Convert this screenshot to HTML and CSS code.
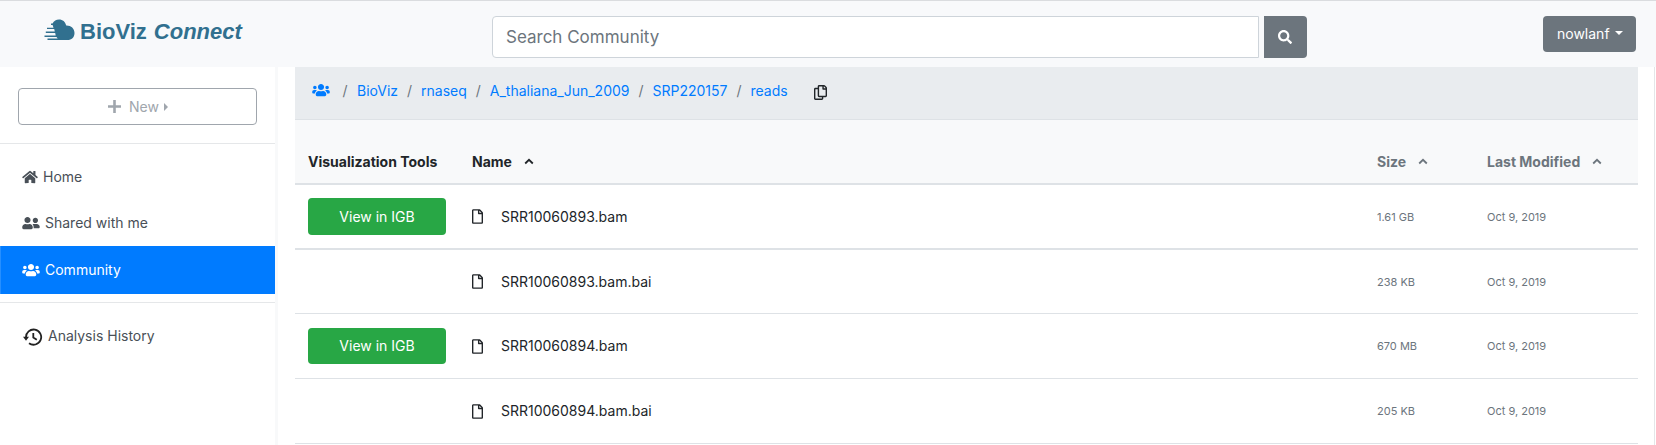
FILE: index.html
```html
<!DOCTYPE html>
<html lang="en">
<head>
<meta charset="utf-8">
<title>BioViz Connect</title>
<link rel="stylesheet" href="styles.css">
</head>
<body>
<svg class="defs" aria-hidden="true">
  <symbol id="users" viewBox="0 0 640 512"><path d="M96 224c35.3 0 64-28.7 64-64s-28.7-64-64-64-64 28.7-64 64 28.7 64 64 64zm448 0c35.3 0 64-28.7 64-64s-28.7-64-64-64-64 28.7-64 64 28.7 64 64 64zm32 32h-64c-17.6 0-33.5 7.1-45.1 18.6 40.3 22.1 68.9 62 75.1 109.4h66c17.7 0 32-14.3 32-32v-32c0-35.3-28.7-64-64-64zm-256 0c61.9 0 112-50.1 112-112S381.9 32 320 32 208 82.1 208 144s50.1 112 112 112zm76.8 32h-8.300c-20.8 10-43.9 16-68.5 16s-47.600-6-68.5-16h-8.300C179.600 288 128 339.600 128 403.200V432c0 26.500 21.500 48 48 48h288c26.500 0 48-21.500 48-48v-28.800c0-63.600-51.600-115.200-115.200-115.200zm-223.700-13.400C161.500 263.100 145.600 256 128 256H64c-35.300 0-64 28.700-64 64v32c0 17.700 14.300 32 32 32h65.900c6.300-47.400 34.900-87.300 75.200-109.400z"/></symbol>
  <symbol id="file" viewBox="0 0 384 512"><path d="M369.900 97.900L286 14C277 5 264.800-.1 252.100-.1H48C21.500 0 0 21.500 0 48v416c0 26.500 21.500 48 48 48h288c26.500 0 48-21.500 48-48V131.900c0-12.700-5.100-25-14.100-34zM332.100 128H256V51.900l76.100 76.100zM48 464V48h160v104c0 13.300 10.700 24 24 24h104v288H48z"/></symbol>
  <symbol id="up" viewBox="0 0 10 7"><path class="stroke" d="M1.200 5.500 5 1.800l3.800 3.700"/></symbol>
</svg>
<header class="topbar">
  <a class="brand">
    <svg class="logo" viewBox="0 0 31 22"><path d="M8.500 4.500C10 1.800 12.200.5 15 .5c3.800 0 6.300 2.300 7.200 6 4.700-.2 8.300 2.900 8.300 7.500 0 4.400-3 7-7 7H3.500v-1.400h10.200l-1.200-1.700H.5v-1.300h11.200l-.5-2.700H1.800v-1.300h9l-.6-2.500H3V8.700h6.500L8.600 6H7V4.500z"/></svg>
    <span class="brand-name">BioViz</span> <em class="brand-em">Connect</em>
  </a>
  <form class="search">
    <input class="search-input" type="text" placeholder="Search Community">
    <button class="search-btn" type="button" aria-label="Search"><svg class="ic-search" viewBox="0 0 512 512"><path d="M505 442.700L405.300 343c-4.500-4.500-10.600-7-17-7H372c27.600-35.300 44-79.700 44-128C416 93.100 322.900 0 208 0S0 93.100 0 208s93.100 208 208 208c48.300 0 92.700-16.400 128-44v16.300c0 6.400 2.500 12.500 7 17l99.700 99.700c9.400 9.400 24.600 9.400 33.900 0l28.300-28.300c9.400-9.400 9.400-24.600.1-34zM208 336c-70.700 0-128-57.200-128-128 0-70.700 57.200-128 128-128 70.700 0 128 57.200 128 128 0 70.700-57.200 128-128 128z"/></svg></button>
  </form>
  <button class="user-btn" type="button"><span>nowlanf</span><i class="caret-down"></i></button>
</header>
<div class="layout">
  <nav class="sidebar">
    <button class="new-btn" type="button"><svg class="ic-plus" viewBox="0 0 13 13"><path d="M5.200 0h2.600v5.200H13v2.600H7.800V13H5.200V7.800H0V5.200h5.200z"/></svg><span>New</span><i class="caret-right"></i></button>
    <div class="nav-main">
      <a class="item home"><svg class="ic-home" viewBox="0 0 576 512"><path d="M280.400 148.300L96 300.100V464a16 16 0 0 0 16 16l112.100-.3a16 16 0 0 0 15.900-16V368a16 16 0 0 1 16-16h64a16 16 0 0 1 16 16v95.600a16 16 0 0 0 16 16.100L464 480a16 16 0 0 0 16-16V300L295.700 148.300a12.200 12.200 0 0 0-15.300 0zM571.600 251.500L488 182.600V44.100a12 12 0 0 0-12-12h-56a12 12 0 0 0-12 12v72.600l-89.500-73.700a48 48 0 0 0-61 0L4.300 251.500a12 12 0 0 0-1.600 16.900l25.500 31a12 12 0 0 0 16.900 1.600l235.200-193.700a12.200 12.200 0 0 1 15.300 0L530.900 301a12 12 0 0 0 16.900-1.600l25.500-31a12 12 0 0 0-1.700-16.900z"/></svg><span>Home</span></a>
      <a class="item shared"><svg class="ic-users" viewBox="0 0 640 512"><path d="M192 256c61.900 0 112-50.100 112-112S253.900 32 192 32 80 82.100 80 144s50.100 112 112 112zm76.800 32h-8.300c-20.800 10-43.900 16-68.500 16s-47.600-6-68.500-16h-8.300C51.600 288 0 339.600 0 403.200V432c0 26.500 21.500 48 48 48h288c26.500 0 48-21.500 48-48v-28.800c0-63.600-51.600-115.200-115.200-115.200zM480 256c53 0 96-43 96-96s-43-96-96-96-96 43-96 96 43 96 96 96zm48 32h-3.800c-13.900 4.800-28.600 8-44.200 8s-30.300-3.200-44.200-8H432c-20.400 0-39.200 5.900-55.700 15.400 24.400 26.300 39.700 61.200 39.700 99.800v38.400c0 2.200-.5 4.300-.6 6.400H592c26.500 0 48-21.500 48-48 0-61.900-50.100-112-112-112z"/></svg><span>Shared with me</span></a>
      <a class="item community active"><svg class="ic-users"><use href="#users"/></svg><span>Community</span></a>
    </div>
    <a class="item history"><svg class="ic-history" viewBox="0 0 20 18"><path class="stroke" d="M3 9.500A7.600 7.600 0 1 1 6 15.200M10.300 5v4.500l3.500 2.200"/><path d="M0 8.800h6l-3 3.900z"/></svg><span>Analysis History</span></a>
  </nav>
  <main class="content">
    <div class="crumbs">
      <svg class="ic-users"><use href="#users"/></svg>
      <i class="sep">/</i><a class="c1">BioViz</a>
      <i class="sep">/</i><a class="c2">rnaseq</a>
      <i class="sep">/</i><a class="c3">A_thaliana_Jun_2009</a>
      <i class="sep">/</i><a class="c4">SRP220157</a>
      <i class="sep">/</i><a class="c5">reads</a>
      <svg class="ic-copy" viewBox="0 0 448 512"><path d="M433.900 65.900l-51.800-51.800A48 48 0 0 0 348.100 0H176c-26.500 0-48 21.500-48 48v48H48c-26.500 0-48 21.500-48 48v320c0 26.500 21.500 48 48 48h224c26.500 0 48-21.500 48-48v-48h80c26.500 0 48-21.500 48-48V99.900a48 48 0 0 0-14.100-34zM266 464H54a6 6 0 0 1-6-6V150a6 6 0 0 1 6-6h74v224c0 26.500 21.500 48 48 48h96v42a6 6 0 0 1-6 6zm128-96H182a6 6 0 0 1-6-6V54a6 6 0 0 1 6-6h106v88c0 13.300 10.700 24 24 24h88v202a6 6 0 0 1-6 6zm6-256h-64V48h9.600c1.600 0 3.100.6 4.300 1.800l48.300 48.300a6 6 0 0 1 1.800 4.300V112z"/></svg>
    </div>
    <div class="row head">
      <span class="h-tools">Visualization Tools</span>
      <span class="h-name"><span>Name</span><svg class="ic-up"><use href="#up"/></svg></span>
      <span class="muted"><span>Size</span><svg class="ic-up"><use href="#up"/></svg></span>
      <span class="muted"><span class="h-mod">Last Modified</span><svg class="ic-up"><use href="#up"/></svg></span>
    </div>
    <div class="row first">
      <button class="igb" type="button">View in IGB</button>
      <span class="name"><svg class="ic-file"><use href="#file"/></svg><span>SRR10060893.bam</span></span>
      <span class="meta">1.61 GB</span><span class="meta">Oct 9, 2019</span>
    </div>
    <div class="row">
      <span></span>
      <span class="name"><svg class="ic-file"><use href="#file"/></svg><span>SRR10060893.bam.bai</span></span>
      <span class="meta">238 KB</span><span class="meta">Oct 9, 2019</span>
    </div>
    <div class="row">
      <button class="igb short" type="button">View in IGB</button>
      <span class="name"><svg class="ic-file"><use href="#file"/></svg><span>SRR10060894.bam</span></span>
      <span class="meta">670 MB</span><span class="meta">Oct 9, 2019</span>
    </div>
    <div class="row">
      <span></span>
      <span class="name"><svg class="ic-file"><use href="#file"/></svg><span>SRR10060894.bam.bai</span></span>
      <span class="meta">205 KB</span><span class="meta">Oct 9, 2019</span>
    </div>
  </main>
</div>
</body>
</html>
```
FILE: styles.css
```css
* { box-sizing: border-box; }
body { margin: 0; height: 445px; overflow: hidden; background: #fff; color: #212529; font: 14px/20px Inter, "Liberation Sans", sans-serif; }
svg { display: block; fill: currentColor; flex: none; }
button, input { font: inherit; margin: 0; }
.defs { display: none; }
.stroke { fill: none; stroke: currentColor; stroke-width: 1.8; }

.topbar { height: 67px; border-top: 1px solid #dadcdf; background: #f8f9fb; display: flex; align-items: flex-start; padding: 15px 20px 0 44px; }
.brand { display: flex; color: #31708f; font: bold 22px/32px "Liberation Sans", sans-serif; width: 448px; white-space: pre; }
.logo { width: 31px; height: 22px; margin: 3px 5px 0 0; }
.brand-em { margin-left: 7px; }
.search { display: flex; gap: 5px; }
.search-input { width: 767px; height: 42px; border: 1px solid #ced4da; border-radius: 4px 0 0 4px; background: #fff; padding: 0 13px; font-size: 17px; outline: 0; }
.search-input::placeholder { color: #6c757d; opacity: 1; }
.search-btn { width: 43px; height: 42px; border: 0; border-radius: 0 4px 4px 0; background: #6c757d; color: #fff; display: flex; align-items: center; padding: 0 0 1px 14px; }
.ic-search { width: 14px; height: 14px; }
.user-btn { margin-left: auto; width: 93px; height: 36px; border: 0; border-radius: 4px; background: #6c757d; color: #fff; display: flex; align-items: center; padding: 0 0 0 14px; gap: 5px; }
.caret-down { border: 4px solid transparent; border-top-color: #fff; border-bottom: 0; margin-top: -3px; }

.layout { display: flex; height: 378px; }
.sidebar { width: 278px; border-right: 3px solid #f8f9fa; color: #495057; padding-top: 21px; }
.new-btn { width: 239px; height: 37px; margin-left: 18px; background: #fff; border: 1px solid #a0a6ad; border-radius: 4px; color: #a0a6ad; display: flex; align-items: center; padding: 0 0 0 89px; }
.new-btn span { margin: 0 5px 0 8px; }
.ic-plus { width: 13px; height: 13px; }
.caret-right { border: 4px solid transparent; border-left-color: #a0a6ad; border-right: 0; }
.nav-main { margin-top: 18px; border-top: 1px solid #e5e7e9; border-bottom: 1px solid #e5e7e9; height: 160px; }
.item { display: flex; align-items: center; height: 48px; padding-left: 22px; }
.home { margin-top: 9px; height: 47px; }
.shared { height: 46px; }
.active { background: #007bff; color: #fff; border-left: 1px solid #268fff; padding-left: 21px; }
.history { margin-top: 9px; }
.ic-home { width: 16px; height: 14px; margin-right: 5px; }
.ic-users { width: 18px; height: 14px; }
.item .ic-users { margin-right: 5px; }
.ic-history { width: 20px; height: 18px; margin: 2px 5px 0 1px; color: #222; }

.content { width: 1377px; padding: 0 16px 0 17px; border-right: 1px solid #e4e6e8; }
.crumbs { height: 53px; background: #e9ecef; border-bottom: 1px solid #dee2e6; display: flex; align-items: flex-start; padding: 14px 0 0 17px; color: #007bff; }
.crumbs .ic-users { margin-top: 2px; }
.sep { color: #6c757d; font-style: normal; width: 23px; text-align: center; }
.crumbs .ic-users + .sep { margin-left: 3px; width: 24px; }
.ic-copy { width: 13px; height: 15px; margin: 4px 0 0 26px; color: #212529; }
.row { display: grid; grid-template-columns: 164px 905px 110px 1fr; align-items: center; height: 65px; padding-left: 13px; border-bottom: 1px solid #dee2e6; }
.row:nth-child(4) { height: 64px; }
.head { background: #f8f9fa; border-bottom-width: 2px; font-weight: 700; padding-top: 20px; }
.first { border-bottom-width: 2px; }
.h-name, .muted, .name { display: flex; align-items: center; }
.ic-up { width: 10px; height: 7px; margin-left: 12px; }
.muted, .meta { color: #6c757d; }
.meta { font-size: 11px; }
.igb { width: 138px; height: 37px; border: 0; border-radius: 4px; background: #28a745; color: #fff; padding: 0; }
.short { height: 36px; }
.ic-file { width: 11px; height: 15px; margin-right: 18px; }
```
